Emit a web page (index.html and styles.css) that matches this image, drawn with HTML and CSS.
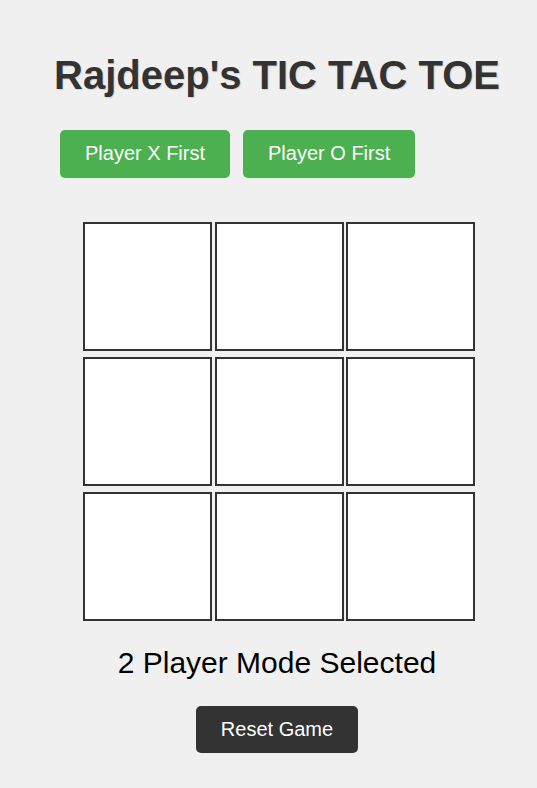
FILE: index.html
```html
<!DOCTYPE html>
<html lang="en">
<head>
<meta charset="utf-8">
<title>Rajdeep's TIC TAC TOE</title>
<link rel="stylesheet" href="styles.css">
</head>
<body>
<div class="page">
  <h1 class="title">Rajdeep's TIC TAC TOE</h1>
  <div class="choices">
    <button class="btn btn-green">Player X First</button>
    <button class="btn btn-green">Player O First</button>
  </div>
  <div class="board">
    <button class="cell"></button>
    <button class="cell"></button>
    <button class="cell"></button>
    <button class="cell"></button>
    <button class="cell"></button>
    <button class="cell"></button>
    <button class="cell"></button>
    <button class="cell"></button>
    <button class="cell"></button>
  </div>
  <p class="status">2 Player Mode Selected</p>
  <div class="reset-row">
    <button class="btn btn-dark">Reset Game</button>
  </div>
</div>
</body>
</html>
```
FILE: styles.css
```css
html, body {
  margin: 0;
  padding: 0;
  background: #f0f0f0;
}
body {
  font-family: "Liberation Sans", Arial, sans-serif;
}
.page {
  padding: 52px 0 0 17px;
  width: 520px;
  text-align: center;
}
.title {
  margin: 0;
  font-size: 40px;
  line-height: 46px;
  font-weight: bold;
  color: #333;
  text-shadow: 1px 1px 1px rgba(0, 0, 0, 0.12);
}
.choices {
  display: flex;
  gap: 13px;
  margin-top: 32px;
  padding-left: 43px;
}
.btn {
  font-family: "Liberation Sans", Arial, sans-serif;
  font-size: 20px;
  color: #fff;
  border: none;
  border-radius: 5px;
  cursor: pointer;
}
.btn-green {
  background: #4caf50;
  padding: 11px 25px 13px;
  line-height: 24px;
}
.btn-dark {
  background: #333;
  padding: 12px 24.5px;
  line-height: 23px;
}
.board {
  display: grid;
  grid-template-columns: repeat(3, 129px);
  grid-auto-rows: 129px;
  column-gap: 2.5px;
  row-gap: 6px;
  margin-top: 44px;
  margin-left: 66px;
  width: 392px;
}
.cell {
  box-sizing: border-box;
  width: 129px;
  height: 129px;
  margin: 0;
  padding: 0;
  background: #fff;
  border: 2px solid #333;
  border-radius: 0;
}
.status {
  margin: 24.5px 0 0;
  font-size: 30px;
  line-height: 34px;
  color: #000;
}
.reset-row {
  margin-top: 26px;
  display: flex;
  justify-content: center;
}
```
